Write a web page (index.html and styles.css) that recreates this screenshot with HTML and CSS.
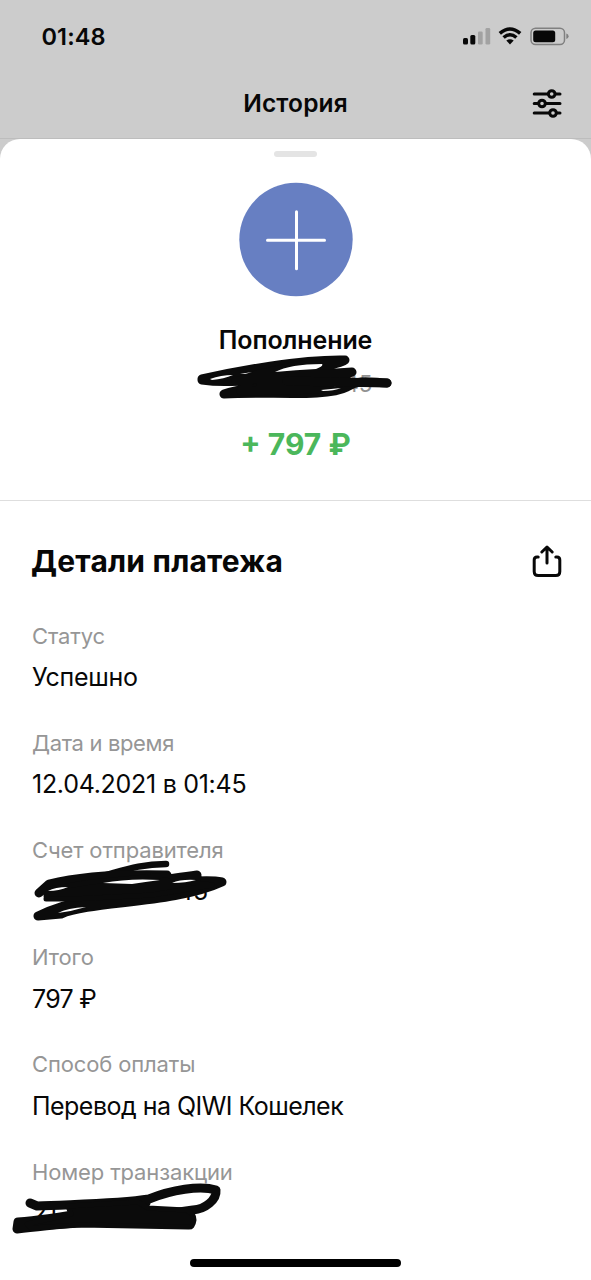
FILE: index.html
```html
<!DOCTYPE html>
<html lang="ru">
<head>
<meta charset="utf-8">
<title>История</title>
<link rel="stylesheet" href="styles.css">
</head>
<body>
<div class="screen">
  <div class="status-bar">
    <span class="time">01:48</span>
    <svg class="status-icons" width="110" height="24" viewBox="460 24 110 24">
      <rect x="463" y="38" width="5" height="6.5" rx="1.5"/>
      <rect x="470.3" y="35" width="5" height="9.5" rx="1.5"/>
      <rect class="dim" x="478" y="31.500" width="4.700" height="13" rx="1.300"/>
      <rect class="dim" x="485.500" y="28" width="4.700" height="16.500" rx="1.300"/>
      <path class="wave" d="M499.800 33.400Q510 24.600 520.200 33.400"/>
      <path class="wave" d="M503.600 37.500Q510 32 516.400 37.500"/>
      <path d="M506.300 40.600Q510 37.700 513.700 40.600L510 44.500Z"/>
      <rect class="shell" x="531" y="28.200" width="33.500" height="16.300" rx="4.500"/>
      <rect x="533.200" y="30.500" width="22" height="11.800" rx="2.500"/>
      <path class="cap" d="M566.300 33.500Q568.600 34.200 568.600 36.300T566.300 39.100Z"/>
    </svg>
  </div>
  <header class="nav">
    <h1 class="nav-title">История</h1>
    <svg class="filter" width="32" height="32" viewBox="531 87 32 32">
      <path d="M534.200 94H560M534.200 103.500H560M534.200 113H560"/>
      <circle cx="551.700" cy="94" r="3.300"/>
      <circle cx="542" cy="103.500" r="3.300"/>
      <circle cx="553" cy="113" r="3.300"/>
    </svg>
  </header>
  <main class="sheet">
    <div class="grabber"></div>
    <section class="summary">
      <svg class="badge" width="114" height="114" viewBox="0 0 114 114">
        <circle cx="57" cy="56.500" r="56.700"/>
        <path d="M28.500 57.200H85.500M57.500 28.700V85.700"/>
      </svg>
      <h2 class="kind">Пополнение</h2>
      <div class="account">45
        <svg class="scribble account-ink" width="200" height="50" viewBox="193 351 200 50">
          <path d="M201 379C236 371 300 359 344 360C335 369 214 379 201 380C235 385 260 377 351 372C324 382 252 384 223 394C266 391 325 398 346 387C359 379 367 382 386 383"/>
          <path d="M235 381L300 374L347 374L320 389L240 391L255 375L300 365L325 377L260 385"/>
          <path d="M286 381L386 383"/>
          <path class="gap" d="M209 379Q220 375 232 375Q223 379 211 380ZM274 372Q289 364 321 364Q323 366 315 369Q295 370 274 372ZM320 390L340 388Q333 391 322 391ZM239 374L251 372L244 374Z"/>
        </svg>
      </div>
      <div class="amount">+ 797 ₽</div>
    </section>
    <section class="details">
      <div class="details-head">
        <h2 class="details-title">Детали платежа</h2>
        <svg class="share" width="32" height="36" viewBox="531 543 32 36">
          <path d="M538.200 557H537Q534.200 557 534.200 560V571.500Q534.200 575.500 538.200 575.500H555.800Q559.800 575.500 559.800 571.500V560Q559.800 557 557 557H555.800M547 563V547.500M541.800 552L547 547L552.200 552"/>
        </svg>
      </div>
      <dl class="rows">
        <div class="row"><dt>Статус</dt><dd>Успешно</dd></div>
        <div class="row"><dt class="tight">Дата и время</dt><dd>12.04.2021 в 01:45</dd></div>
        <div class="row"><dt>Счет отправителя</dt><dd class="hidden-value sender">45
          <svg class="scribble sender-ink" width="200" height="64" viewBox="30 860 200 64">
            <path class="thin" d="M98 877C124 870 139 864 165 864"/>
            <path d="M38 893L48 884C85 875 125 874 166 875L98 883L47 896C91 892 145 882 196 875L151 886C178 882 206 879 221 882C174 904 90 901 60 914L37 916C66 902 103 895 160 889L205 882"/>
            <path class="fill" d="M48 889L90 882L166 875L180 881L211 885L151 895L72 899L45 899Z"/>
            <path class="gap" d="M47 891Q54 887 67 887Q58 891 47 891ZM102 883Q128 878 159 880Q144 882 131 884ZM57 913Q66 908 85 907Q72 911 57 913ZM171 883Q180 879 195 880Q185 883 171 883Z"/>
          </svg>
        </dd></div>
        <div class="row"><dt>Итого</dt><dd class="v-total">797 ₽</dd></div>
        <div class="row"><dt>Способ оплаты</dt><dd class="v-method">Перевод на QIWI Кошелек</dd></div>
        <div class="row"><dt>Номер транзакции</dt><dd class="hidden-value transaction">21
          <svg class="scribble transaction-ink" width="214" height="56" viewBox="8 1180 214 56">
            <path d="M29 1202L36 1205C75 1203 117 1203 148 1198C170 1189 199 1184 215 1189C216 1199 204 1208 192 1209L157 1214C100 1220 54 1223 16 1228L17 1221C65 1218 96 1207 145 1202"/>
            <path class="fill" d="M67 1205L137 1201L147 1207L185 1209Q193 1212 193 1219Q192 1227 187 1226L80 1224L30 1227L26 1223L70 1213Z"/>
          </svg>
        </dd></div>
      </dl>
    </section>
  </main>
  <div class="home-indicator"></div>
</div>
</body>
</html>
```
FILE: styles.css
```css
* { box-sizing: border-box; margin: 0; padding: 0; }
body { background: #ccc; color: #070707; font-family: Inter, "Liberation Sans", sans-serif; }
.screen { position: relative; width: 591px; height: 1280px; overflow: hidden; display: flex; flex-direction: column; background: #ccc; }
.status-bar { height: 72px; display: flex; justify-content: space-between; align-items: center; padding: 0 21px 0 41.5px; }
.time { font-size: 23.5px; font-weight: 600; letter-spacing: 0.1px; }
.status-icons { fill: #080808; }
.status-icons .dim { fill: #a2a2a2; }
.status-icons .wave { fill: none; stroke: #080808; stroke-width: 3.6; }
.status-icons .shell { fill: none; stroke: #808080; stroke-width: 1.5; }
.status-icons .cap { fill: #808080; }
.nav { height: 67px; display: grid; grid-template-columns: 1fr auto 1fr; align-items: start; padding: 15px 28px 0; border-bottom: 1px solid #bdbdbd; }
.nav-title { grid-column: 2; font-size: 24.5px; line-height: 32px; font-weight: 600; letter-spacing: 0.15px; }
.filter { justify-self: end; fill: #ccc; stroke: #080808; stroke-width: 3; stroke-linecap: round; }
.sheet { flex: 1; background: #fff; border-radius: 20px 20px 0 0; padding-top: 12px; }
.grabber { width: 43px; height: 6px; border-radius: 3px; background: #e4e4e4; margin: 0 auto; }
.summary { height: 344px; display: flex; flex-direction: column; align-items: center; padding-top: 26px; border-bottom: 1.5px solid #dedede; }
.badge { fill: #677fc2; stroke: none; overflow: visible; }
.badge path { stroke: #fff; stroke-width: 3; stroke-linecap: round; }
.kind { margin-top: 27px; font-size: 25px; line-height: 32px; font-weight: 600; letter-spacing: -0.1px; }
.account { position: relative; width: 154px; height: 28px; margin-top: 14px; font-size: 22.5px; line-height: 28px; text-align: right; color: #929292; }
.scribble { position: absolute; fill: none; stroke: #0b0b0b; stroke-width: 9; stroke-linecap: round; stroke-linejoin: round; }
.scribble .fill { fill: #0b0b0b; stroke-width: 5; }
.scribble .thin { stroke-width: 6.5; }
.scribble .gap { fill: #fff; stroke: none; }
.account-ink { left: -25px; top: -19px; }
.amount { margin-top: 26px; font-size: 30px; line-height: 40px; font-weight: 700; color: #4bb75b; }
.details { padding: 38px 28px 0 32px; }
.details-head { height: 44px; display: flex; align-items: center; justify-content: space-between; }
.details-title { font-size: 30px; line-height: 44px; font-weight: 700; letter-spacing: 0.2px; margin-left: -1px; }
.share { fill: none; stroke: #080808; stroke-width: 3; stroke-linecap: round; stroke-linejoin: round; }
.rows { margin-top: 38.6px; }
.row { height: 107.2px; display: flex; flex-direction: column; gap: 11.4px; }
.row dt { font-size: 22px; line-height: 28px; letter-spacing: -0.14px; color: #969696; }
.row dt.tight { letter-spacing: -0.35px; }
.row dd { font-size: 25px; line-height: 32px; letter-spacing: -0.28px; white-space: nowrap; }
.row .v-total { letter-spacing: -0.7px; }
.row .v-method { letter-spacing: -0.53px; }
.hidden-value { position: relative; height: 32px; }
.sender { width: 176px; text-align: right; }
.sender-ink { left: -1px; top: -15px; }
.transaction-ink { left: -23px; top: -16px; }
.home-indicator { position: absolute; left: 190px; bottom: 13px; width: 211px; height: 8px; border-radius: 4px; background: #000; }
```
